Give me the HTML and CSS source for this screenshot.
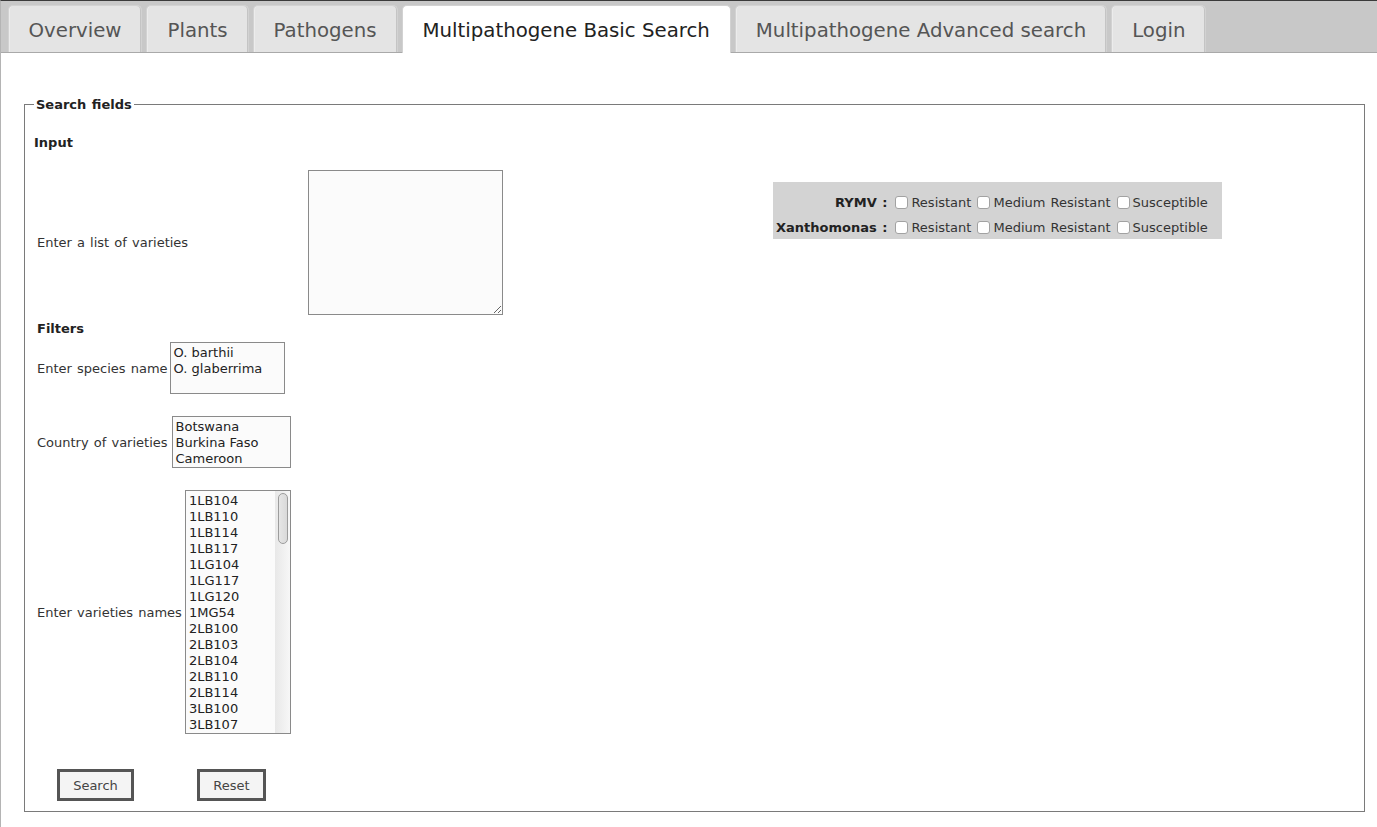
FILE: index.html
```html
<!DOCTYPE html>
<html lang="en">
<head>
<meta charset="utf-8">
<title>Multipathogene Basic Search</title>
<link rel="stylesheet" href="styles.css">
</head>
<body>
<nav class="tabs">
  <a class="tab" href="#">Overview</a>
  <a class="tab" href="#">Plants</a>
  <a class="tab" href="#">Pathogens</a>
  <a class="tab active" href="#">Multipathogene Basic Search</a>
  <a class="tab" href="#">Multipathogene Advanced search</a>
  <a class="tab" href="#">Login</a>
</nav>
<main class="content">
  <form class="search-form">
    <fieldset class="search">
      <legend>Search fields</legend>
      <div class="heading input-heading">Input</div>
      <div class="input-row">
        <label class="list-label" for="varlist">Enter a list of varieties</label>
        <textarea id="varlist" class="varlist"></textarea>
        <div class="resist">
          <div class="rlabel">RYMV :</div>
          <div class="ropts"><input type="checkbox" id="r1"><label for="r1">Resistant</label><input type="checkbox" id="r2"><label for="r2">Medium Resistant</label><input type="checkbox" id="r3"><label for="r3">Susceptible</label></div>
          <div class="rlabel">Xanthomonas :</div>
          <div class="ropts"><input type="checkbox" id="x1"><label for="x1">Resistant</label><input type="checkbox" id="x2"><label for="x2">Medium Resistant</label><input type="checkbox" id="x3"><label for="x3">Susceptible</label></div>
        </div>
      </div>
      <div class="heading filters-heading">Filters</div>
      <div class="filter-row species-row">
        <label for="species">Enter species name</label>
        <select id="species" class="listbox species" multiple>
          <option>O. barthii</option>
          <option>O. glaberrima</option>
        </select>
      </div>
      <div class="filter-row country-row">
        <label for="country">Country of varieties</label>
        <select id="country" class="listbox country" multiple>
          <option>Botswana</option>
          <option>Burkina Faso</option>
          <option>Cameroon</option>
        </select>
      </div>
      <div class="filter-row varieties-row">
        <label for="varieties">Enter varieties names</label>
        <div class="listwrap">
          <select id="varieties" class="listbox varieties" multiple>
            <option>1LB104</option><option>1LB110</option><option>1LB114</option><option>1LB117</option>
            <option>1LG104</option><option>1LG117</option><option>1LG120</option><option>1MG54</option>
            <option>2LB100</option><option>2LB103</option><option>2LB104</option><option>2LB110</option>
            <option>2LB114</option><option>3LB100</option><option>3LB107</option><option>3LB110</option>
            <option>3LB114</option><option>3LG104</option><option>3LG117</option><option>4LB100</option>
            <option>4LB104</option><option>4LB110</option><option>4LG104</option><option>4MG54</option>
            <option>5LB100</option><option>5LB103</option><option>5LB107</option><option>5LG117</option>
            <option>6LB104</option><option>6LB110</option><option>6LB114</option><option>6MG54</option>
            <option>7LB100</option><option>7LB107</option><option>7LG120</option><option>8LB104</option>
            <option>8LB110</option><option>8LG104</option><option>9LB100</option><option>9LB114</option>
            <option>CG14</option><option>CG17</option><option>CG20</option><option>IRGC103544</option>
            <option>IRGC103759</option><option>IRGC104038</option><option>IRGC104545</option><option>IRGC86713</option>
            <option>RAM100</option><option>RAM101</option><option>RAM102</option><option>RAM103</option>
            <option>RAM104</option><option>RAM105</option><option>RAM106</option><option>RAM107</option>
            <option>TOG5681</option><option>TOG5860</option><option>TOG6216</option><option>TOG7102</option>
          </select>
          <div class="fake-scroll" aria-hidden="true"><div class="fake-thumb"></div></div>
        </div>
      </div>
      <div class="buttons">
        <button type="submit" class="btn btn-search">Search</button>
        <button type="reset" class="btn btn-reset">Reset</button>
      </div>
    </fieldset>
  </form>
</main>
</body>
</html>
```

FILE: styles.css
```css
* { box-sizing: border-box; }

html, body {
  margin: 0;
  background: #fff;
}

body {
  font-family: "DejaVu Sans", Verdana, sans-serif;
  font-size: 13px;
  word-spacing: 1px;
  color: #333;
  border-top: 1px solid #3a3a3a;
  border-left: 1px solid #b4b4b4;
  min-height: 827px;
}

/* ---------- Tabs ---------- */
.tabs {
  display: flex;
  align-items: flex-end;
  gap: 4px;
  height: 52px;
  padding: 4px 0 0 6.5px;
  background: #c8c8c8;
  border-bottom: 1px solid #a9a9a9;
}

.tab {
  display: flex;
  align-items: center;
  height: 47px;
  padding: 2px 20px 0;
  font-size: 19.75px;
  word-spacing: 0;
  color: #555;
  text-decoration: none;
  background: #e4e4e4;
  border: 1px solid #d2d2d2;
  border-bottom: 0;
  border-radius: 5px 5px 0 0;
  box-shadow: inset -1px 0 0 #c4c4c4, inset 1px 0 0 #ececec;
}

.tab.active {
  height: 48px;
  margin-bottom: -1px;
  background: #fff;
  color: #222;
  box-shadow: none;
}

/* ---------- Fieldset ---------- */
.search-form { margin: 0; }

.search {
  margin: 42px 12px 0 23px;
  padding: 0 9px 10px 9px;
  border: 1px solid #7a7a7a;
  min-width: 0;
}

.search legend {
  padding: 2px 2px 0;
  font-weight: bold;
  line-height: 16px;
  color: #222;
}

.heading {
  font-weight: bold;
  line-height: 16px;
  color: #222;
}

.input-heading { margin-top: 22px; }

.filters-heading {
  margin-top: 6px;
  padding-left: 3px;
}

/* ---------- Input row ---------- */
.input-row {
  display: flex;
  margin-top: 19px;
  padding-left: 3px;
}

.list-label {
  flex: 0 0 271px;
  align-self: center;
}

.varlist {
  width: 195px;
  height: 145px;
  margin: 0;
  background: #fbfbfb;
  border: 1px solid #8a8a8a;
  font-family: inherit;
  font-size: 13px;
}

.resist {
  align-self: flex-start;
  display: grid;
  grid-template-columns: auto auto;
  grid-auto-rows: 25px;
  align-items: center;
  margin: 12px 0 0 270px;
  padding: 8px 14px 0 3px;
  height: 57px;
  background: #d3d3d3;
}

.rlabel {
  text-align: right;
  font-weight: bold;
  color: #222;
  padding-right: 2px;
}

.ropts { white-space: nowrap; }

.ropts input {
  appearance: none;
  -webkit-appearance: none;
  width: 13px;
  height: 13px;
  margin: 0 3px 0 6px;
  vertical-align: -2px;
  background: #fff;
  border: 1px solid #a2a2a2;
  border-radius: 3px;
}

/* ---------- Filter rows ---------- */
.filter-row {
  display: flex;
  align-items: center;
  gap: 4px;
  padding-left: 3px;
}

.species-row { margin-top: 5px; gap: 2px; }
.country-row { margin-top: 22px; }
.varieties-row { margin-top: 22px; gap: 3px; }

.listbox {
  display: block;
  margin: 0;
  padding: 2px 1px 0;
  font-family: inherit;
  font-size: 13px;
  color: #222;
  background: #fbfbfb;
  border: 1px solid #8a8a8a;
  border-radius: 0;
  outline: none;
}

.listbox option {
  padding: 0 2px;
  line-height: 16px;
  min-height: 16px;
}

.species { width: 115px; height: 52px; }
.country { width: 119px; height: 52px; }
.varieties { width: 106px; height: 244px; }

.listwrap {
  position: relative;
}

.fake-scroll {
  position: absolute;
  top: 1px;
  right: 1px;
  bottom: 1px;
  width: 15px;
  background: linear-gradient(to right, #e8e8e8, #f7f7f7);
}

.fake-thumb {
  width: 10px;
  height: 51px;
  margin: 2px 0 0 3px;
  background: linear-gradient(to right, #e6e6e6, #d9d9d9);
  border: 1px solid #9c9c9c;
  border-radius: 5px;
}

/* ---------- Buttons ---------- */
.buttons {
  display: flex;
  gap: 63px;
  margin-top: 35px;
  padding-left: 23px;
}

.btn {
  height: 32px;
  margin: 0;
  padding: 0;
  font-family: inherit;
  font-size: 13px;
  color: #444;
  background: #f4f4f4;
  border: 3px solid #555;
  border-radius: 0;
}

.btn-search { width: 77px; }
.btn-reset { width: 69px; }
```
